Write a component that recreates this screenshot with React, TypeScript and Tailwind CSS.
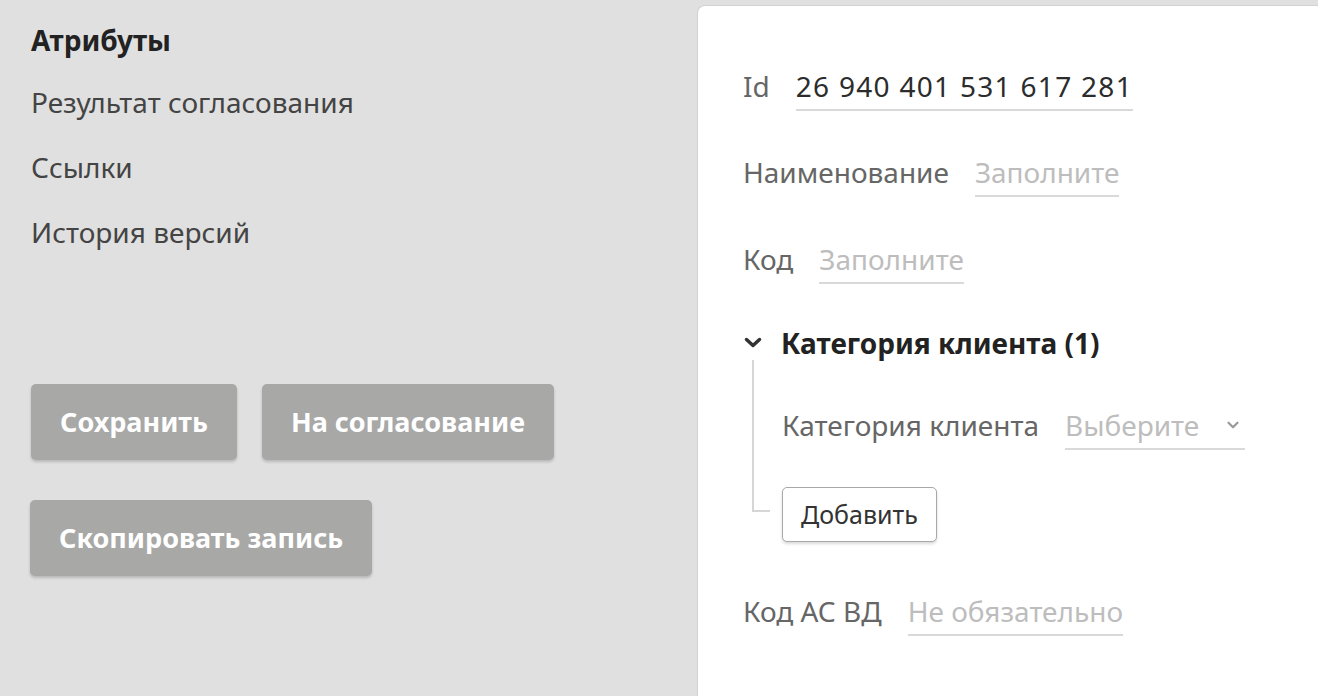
import { ChevronDown } from "lucide-react";

function Field({ label, value, filled, className, valueClass }: { label: string; value: string; filled?: boolean; className?: string; valueClass?: string }) {
    return (
        <div className={"flex items-start " + (className ?? "")}>
            <span className="text-[#666] leading-[32px]">{label}</span>
            <span
                className={
                    "ml-[26px] leading-[32px] pb-[7px] border-b-2 border-[#d9d9d9] " +
                    (filled ? "text-[#2c2c2c] " : "text-[#bdbdbd] ") +
                    (valueClass ?? "")
                }
            >
                {value}
            </span>
        </div>
    );
}

function GreyButton({ children }: { children: string }) {
    return (
        <button className="h-[76px] px-[29px] rounded-[5px] bg-[#a8a8a7] text-white text-[27px] font-bold shadow-[0_2px_3px_rgba(0,0,0,0.18)]">
            {children}
        </button>
    );
}

export default function App() {
    return (
        <div className="flex w-[1318px] h-[696px] bg-[#e0e0e0] overflow-hidden text-[28px] font-['Noto_Sans',sans-serif]">
            <aside className="w-[697px] shrink-0 pl-[31px] pt-[24px]">
                <nav className="flex flex-col">
                    <span className="leading-[32px] font-bold text-[#222]">Атрибуты</span>
                    <span className="leading-[32px] mt-[30px] text-[#444]">Результат согласования</span>
                    <span className="leading-[32px] mt-[33px] text-[#444]">Ссылки</span>
                    <span className="leading-[32px] mt-[33px] text-[#444]">История версий</span>
                </nav>

                <div className="mt-[136px] flex gap-[25px]">
                    <GreyButton>Сохранить</GreyButton>
                    <GreyButton>На согласование</GreyButton>
                </div>
                <div className="mt-[40px] -ml-px">
                    <GreyButton>Скопировать запись</GreyButton>
                </div>
            </aside>

            <main className="flex-1 mt-[5px] bg-white rounded-tl-[8px] border-l border-t border-[#d2d2d2] pl-[45px] pt-[64px]">
                <Field label="Id" value="26 940 401 531 617 281" filled valueClass="tracking-[1.3px]" />
                <Field className="mt-[45px]" label="Наименование" value="Заполните" />
                <Field className="mt-[46px]" label="Код" value="Заполните" />

                <div className="mt-[43px] flex items-center leading-[32px]">
                    <svg width="18" height="12" viewBox="0 0 18 12" className="ml-[1px] mr-[19px] shrink-0">
                        <path d="M2.5 2.5 L9 8.5 L15.5 2.5" fill="none" stroke="#333" strokeWidth="3.5" strokeLinecap="round" strokeLinejoin="round" />
                    </svg>
                    <span className="font-bold text-[#222]">Категория клиента (1)</span>
                </div>

                <div className="flex">
                    <div className="w-[18px] ml-[9px] mt-[1px] h-[152px] border-l-2 border-b-2 border-[#d6d6d6] shrink-0" />
                    <div className="ml-[12px]">
                        <div className="flex items-start mt-[50px]">
                            <span className="text-[#666] leading-[32px]">Категория клиента</span>
                            <span className="ml-[26px] w-[180px] flex items-center justify-between leading-[32px] pb-[7px] border-b-2 border-[#d9d9d9] text-[#bdbdbd]">
                                Выберите
                                <ChevronDown size={18} strokeWidth={3} className="text-[#9a9a9a] mr-[3px]" />
                            </span>
                        </div>
                        <button className="mt-[37px] h-[55px] px-[18px] bg-white border border-[#a8a8a8] rounded-[5px] text-[25px] text-[#333] shadow-[0_2px_3px_rgba(0,0,0,0.15)]">
                            Добавить
                        </button>
                    </div>
                </div>

                <Field className="mt-[53px]" label="Код АС ВД" value="Не обязательно" />
            </main>
        </div>
    );
}
